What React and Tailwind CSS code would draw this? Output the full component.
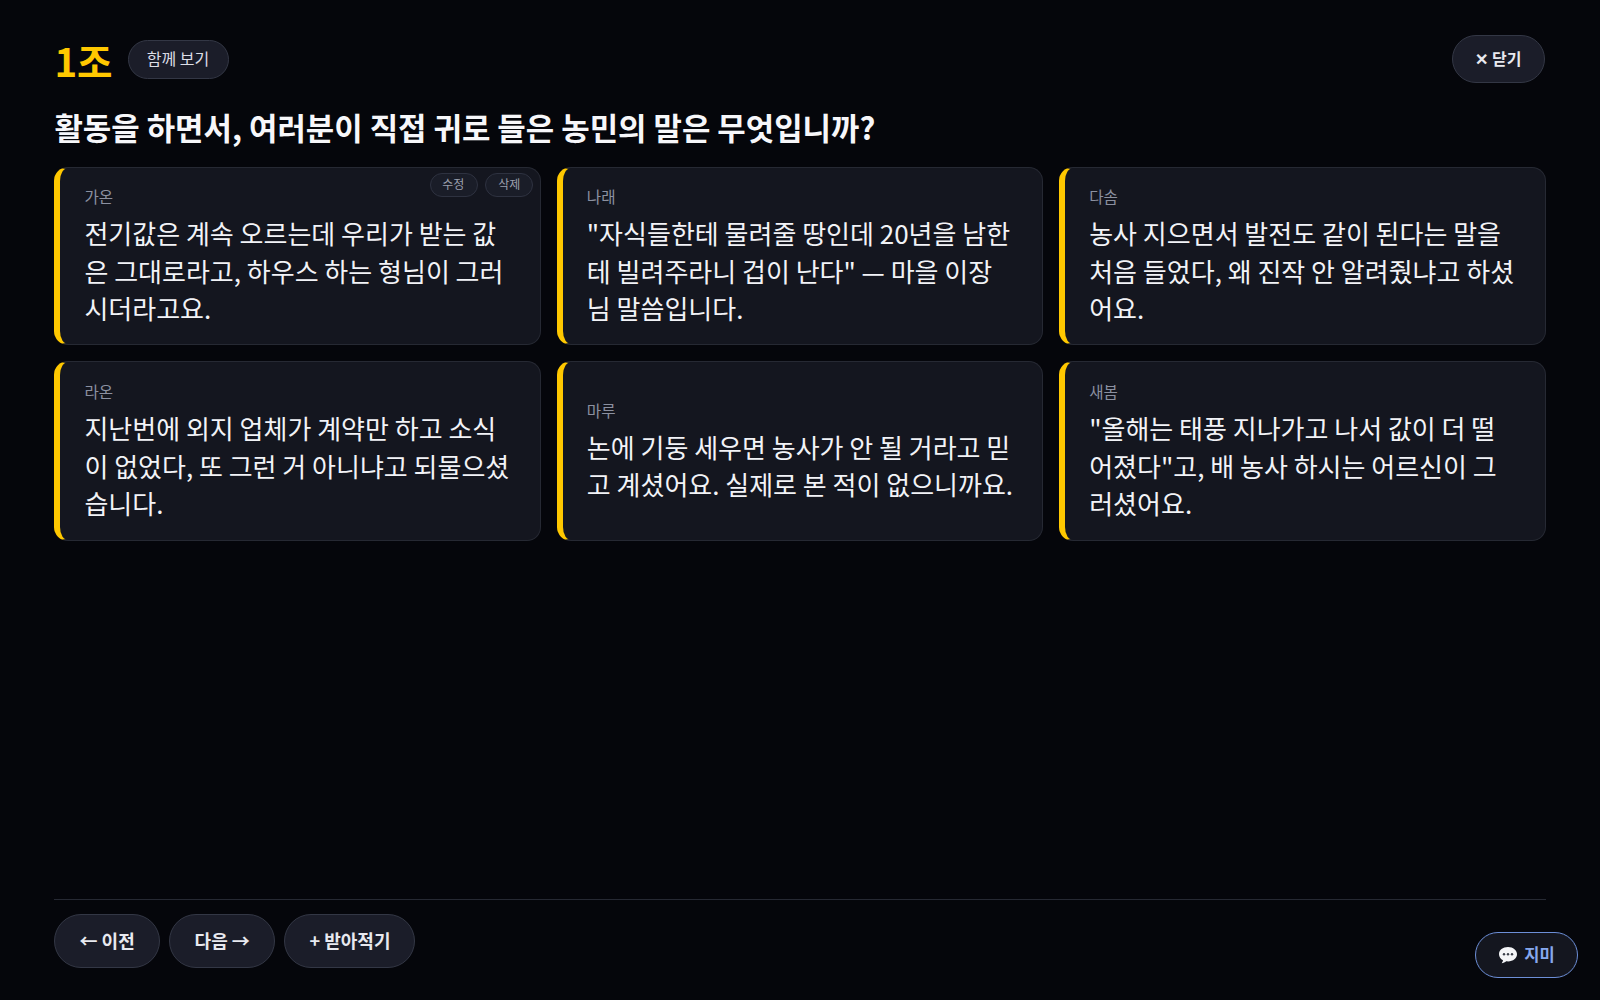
const cards = [
  { name: "가온", text: "전기값은 계속 오르는데 우리가 받는 값은 그대로라고, 하우스 하는 형님이 그러시더라고요.", edit: true },
  { name: "나래", text: "\"자식들한테 물려줄 땅인데 20년을 남한테 빌려주라니 겁이 난다\" — 마을 이장님 말씀입니다." },
  { name: "다솜", text: "농사 지으면서 발전도 같이 된다는 말을 처음 들었다, 왜 진작 안 알려줬냐고 하셨어요." },
  { name: "라온", text: "지난번에 외지 업체가 계약만 하고 소식이 없었다, 또 그런 거 아니냐고 되물으셨습니다." },
  { name: "마루", text: "논에 기둥 세우면 농사가 안 될 거라고 믿고 계셨어요. 실제로 본 적이 없으니까요." },
  { name: "새봄", text: "\"올해는 태풍 지나가고 나서 값이 더 떨어졌다\"고, 배 농사 하시는 어르신이 그러셨어요." },
];

function Card({ name, text, edit }) {
  return (
    <div className="relative flex flex-col justify-center rounded-[14px] border border-l-[6px] border-[#262933] border-l-[#ffc800] bg-[#14161f] py-4 pl-6 pr-7">
      {edit && (
        <div className="absolute right-[6.5px] top-[5px] flex gap-[7px]">
          <button className="h-6 w-12 rounded-full border border-[#2e3240] bg-[#1a1d28] pb-[2px] pr-[2px] text-xs text-[#9a9fad]">수정</button>
          <button className="h-6 w-12 rounded-full border border-[#2e3240] bg-[#1a1d28] pb-[2px] text-xs text-[#9a9fad]">삭제</button>
        </div>
      )}
      <div className="text-[15.6px] leading-[22px] text-[#8b90a0]">{name}</div>
      <div className="mt-[7px] text-[26px] leading-[37.5px] text-[#f2f3f7]">{text}</div>
    </div>
  );
}

function FootButton({ children, className }) {
  return (
    <button className={`h-[54px] rounded-full border border-[#333745] bg-[#1b1d29] pb-[2px] text-lg font-bold text-[#e8e9ef] ${className}`}>
      {children}
    </button>
  );
}

export default function App() {
  return (
    <div
      className="flex h-screen flex-col bg-[#05060b] pb-[32px] pl-[54.4px] pr-[54.4px] pt-[35px] text-white"
      style={{ fontFamily: '"Noto Sans CJK KR", "Noto Sans", sans-serif' }}
    >
      <div className="flex items-center justify-between">
        <div className="flex items-center gap-[15px]">
          <h1 className="pt-[2px] text-[38.5px] font-bold leading-[45px] text-[#ffc800]">1조</h1>
          <button className="h-[39px] w-[101px] rounded-full border border-[#333745] bg-[#1b1d29] pb-[3px] text-base text-[#dcdee6]">함께 보기</button>
        </div>
        <button className="mr-[0.6px] h-[48px] w-[93px] rounded-full border border-[#333745] bg-[#1b1d29] pb-[3px] text-base font-bold text-[#e8e9ef]">✕ 닫기</button>
      </div>

      <h2 className="mt-[20.5px] text-[30.9px] font-bold leading-[46px] text-[#f7f7fa]">활동을 하면서, 여러분이 직접 귀로 들은 농민의 말은 무엇입니까?</h2>

      <div className="mt-[17.5px] grid grid-cols-3 grid-rows-[178px_179.5px] gap-4">
        {cards.map((c) => (
          <Card key={c.name} {...c} />
        ))}
      </div>

      <div className="mt-auto flex gap-[9.3px] border-t border-[#262933] pt-[14px]">
        <FootButton className="w-[105.5px]">← 이전</FootButton>
        <FootButton className="w-[106px]">다음 →</FootButton>
        <FootButton className="w-[131px]">+ 받아적기</FootButton>
      </div>

      <button className="fixed bottom-[22px] right-[22px] flex h-[46px] w-[103px] items-center justify-center gap-[6px] rounded-full border border-[#6d8fd8] bg-[#14161f] pb-[1px] text-[16.5px] font-bold text-[#86a8ee]">
        <svg width="20" height="20" viewBox="0 0 20 20" aria-hidden="true">
          <path d="M10 2C4.8 2 1 5.1 1 9.2c0 2.6 1.6 4.8 4 6.1-.1 1-.6 2-1.3 2.9 1.7-.2 3.3-1 4.5-1.9.6.1 1.2.1 1.8.1 5.2 0 9-3.1 9-7.1S15.200 2 10 2z" fill="#f4f5f8" />
          <circle cx="6" cy="9.300" r="1.200" fill="#3b3f4a" />
          <circle cx="10" cy="9.300" r="1.200" fill="#3b3f4a" />
          <circle cx="14" cy="9.300" r="1.200" fill="#3b3f4a" />
        </svg>
        <span>지미</span>
      </button>
    </div>
  );
}
